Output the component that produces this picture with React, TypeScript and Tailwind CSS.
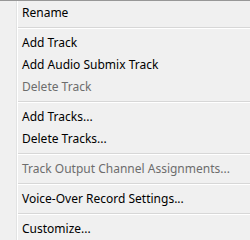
import React from 'react';

type Entry = { label: string; disabled?: boolean } | 'sep';

const entries: Entry[] = [
  { label: 'Rename' },
  'sep',
  { label: 'Add Track' },
  { label: 'Add Audio Submix Track' },
  { label: 'Delete Track', disabled: true },
  'sep',
  { label: 'Add Tracks...' },
  { label: 'Delete Tracks...' },
  'sep',
  { label: 'Track Output Channel Assignments...', disabled: true },
  'sep',
  { label: 'Voice-Over Record Settings...' },
  'sep',
  { label: 'Customize...' },
];

const App: React.FC = () => {
  return (
    <div
      className="w-[250px] h-[240px] overflow-hidden bg-[#f0f0f0] border-t border-[#979797] pt-px relative"
      style={{ fontFamily: '"Noto Sans", "Open Sans", sans-serif' }}
    >
      {/* Icon gutter divider */}
      <div className="absolute left-[16px] top-0 bottom-0 w-[2px] flex">
        <div className="w-px bg-[#e2e3e3]"></div>
        <div className="w-px bg-white"></div>
      </div>

      <div className="flex flex-col">
        {entries.map((e, idx) =>
          e === 'sep' ? (
            <div key={idx} className="h-[8px] pl-[16px] flex flex-col justify-center">
              <div className="h-px bg-[#d7d7d7]"></div>
              <div className="h-px bg-white"></div>
            </div>
          ) : (
            <div
              key={idx}
              className={`h-[22px] pl-[22px] flex items-center text-[12px] leading-none whitespace-nowrap ${
                e.disabled ? 'text-[#6d6d6d]' : 'text-black'
              }`}
            >
              {e.label}
            </div>
          )
        )}
      </div>
    </div>
  );
};

export default App;
